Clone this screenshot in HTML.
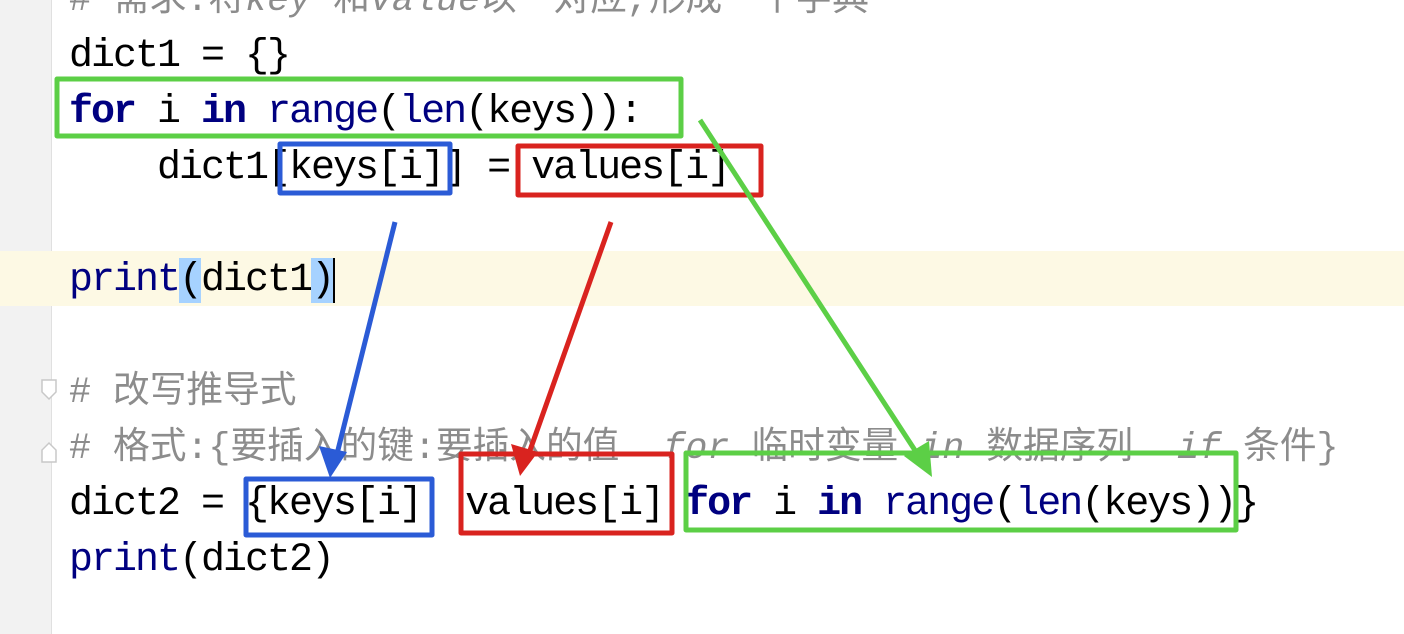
<!DOCTYPE html>
<html><head><meta charset="utf-8"><style>
body{margin:0;width:1404px;height:634px;overflow:hidden;background:#fff;position:relative;font-family:"Liberation Mono","Noto Sans CJK SC",monospace;font-size:40px;letter-spacing:-2px;color:#000}
.gut{position:absolute;left:0;top:0;width:51px;height:634px;background:#f2f2f2;border-right:1px solid #e0e0e0}
.hl{position:absolute;left:0;top:251px;width:1404px;height:55px;background:#fdf9e4}
.l{position:absolute;left:69px;height:56px;line-height:56px;white-space:pre}
.k{color:#000080;font-weight:bold}
.b{color:#000080}
.c{color:#8c8c8c;font-size:36.7px;letter-spacing:0}
.c i{font-style:italic}
.sel{background:#a6d2ff}
</style></head><body>
<div class="gut"></div>
<div class="hl"></div>
<div class="l c" style="top:-27px"># 需求:将<i>key</i> 和<i>value</i>以一对应,形成一个字典</div>
<div class="l" style="top:29px">dict1 = {}</div>
<div class="l" style="top:85px"><span class="k">for</span> i <span class="k">in</span> <span class="b">range</span>(<span class="b">len</span>(keys)):</div>
<div class="l" style="top:141px">    dict1[keys[i]] = values[i]</div>
<div class="l" style="top:253px"><span class="b">print</span><span class="sel">(</span>dict1<span class="sel">)</span><span style="border-left:2px solid #000"></span></div>
<div class="l c" style="top:365px"># 改写推导式</div>
<div class="l c" style="top:421px"># 格式:{要插入的键:要插入的值  <i>for</i> 临时变量 <i>in</i> 数据序列  <i>if</i> 条件}</div>
<div class="l" style="top:477px">dict2 = {keys[i]  values[i] <span class="k">for</span> i <span class="k">in</span> <span class="b">range</span>(<span class="b">len</span>(keys))}</div>
<div class="l" style="top:533px"><span class="b">print</span>(dict2)</div>
<svg style="position:absolute;left:0;top:0" width="1404" height="634">
<g fill="none" stroke-width="5" stroke-linejoin="round">
<rect x="57" y="79" width="624" height="57" stroke="#5ccf46"/>
<rect x="280" y="144" width="170" height="49" stroke="#2b5bd6"/>
<rect x="518" y="146" width="243" height="49" stroke="#d9231f"/>
<rect x="246" y="479" width="186" height="56" stroke="#2b5bd6"/>
<rect x="461" y="454" width="211" height="79" stroke="#d9231f"/>
<rect x="686" y="453" width="550" height="77" stroke="#5ccf46"/>
<line x1="395" y1="222" x2="336" y2="458" stroke="#2b5bd6"/>
<line x1="611" y1="222" x2="528" y2="456" stroke="#d9231f"/>
<line x1="700" y1="120" x2="920" y2="458" stroke="#5ccf46"/>
</g>
<polygon points="330,478 319,446 347,452" fill="#2b5bd6"/>
<polygon points="520,476 511,444 538,452" fill="#d9231f"/>
<polygon points="932,477 904,456 929,441" fill="#5ccf46"/>
<g fill="#fff" stroke="#c8c8c8" stroke-width="1.5">
<path d="M42,380 h14 v12 l-7,7 l-7,-7 z"/>
<path d="M42,462 h14 v-12 l-7,-7 l-7,7 z"/>
</g>
</svg>
</body></html>
